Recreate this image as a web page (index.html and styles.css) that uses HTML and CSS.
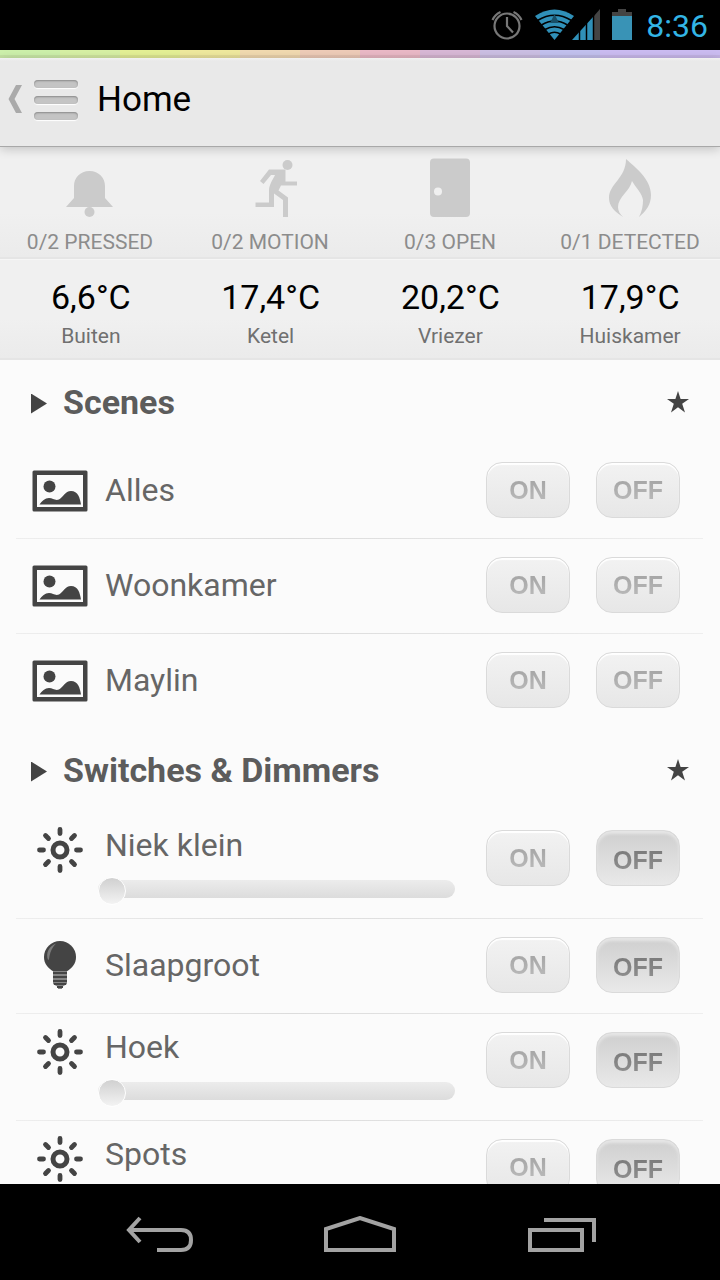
FILE: index.html
```html
<!DOCTYPE html>
<html lang="nl">
<head>
<meta charset="utf-8">
<meta name="viewport" content="width=device-width, initial-scale=1">
<title>Home</title>
<link rel="stylesheet" href="styles.css">
</head>
<body>
<svg class="sprite" aria-hidden="true">
  <symbol id="scene" viewBox="0 0 56 42">
    <path fill-rule="evenodd" d="M2 0.500H54Q55.500 0.500 55.500 2V40Q55.500 41.500 54 41.500H2Q0.500 41.500 0.500 40V2Q0.500 0.500 2 0.500ZM5 5V37H51V5Z"/>
    <circle cx="17.500" cy="16.500" r="6"/>
    <path d="M7.500 34.500C10 31 13 28 17 28C21 28 23 31 27 29.500C31 27.500 33 21 39 21C46 21 48 28 49 34.500Z"/>
  </symbol>
  <symbol id="sun" viewBox="0 0 48 48">
    <circle cx="24" cy="24" r="7" fill="none" stroke="currentColor" stroke-width="5"/>
    <path fill="none" stroke="currentColor" stroke-width="4.800" stroke-linecap="round" d="M24 3.500V7.500M24 40.500V44.500M3.500 24H7.500M40.500 24H44.500M9.500 9.500L12.500 12.500M35.500 35.500L38.500 38.500M9.500 38.500L12.500 35.500M35.500 12.500L38.500 9.500"/>
  </symbol>
  <symbol id="bulb" viewBox="0 0 48 48">
    <path d="M24 0A16 16 0 0 0 8 16C8 23 12 27 17.500 30.500H30.500C36 27 40 23 40 16A16 16 0 0 0 24 0Z"/>
    <path fill="#7a7a7a" d="M20 2.500C13 5 9.500 12 12 19C13 19 13 18 13.500 15C14.500 10 16.500 6 20 2.500Z"/>
    <path fill="#858585" d="M17 30H31V43L26 46V48H22V46L17 43Z"/>
    <path fill="none" stroke="currentColor" stroke-width="2" d="M17 32H31M17 36H31M17 40H31M18 43H30M21 46H27"/>
  </symbol>
  <symbol id="star" viewBox="0 0 24 24">
    <path d="M12 1L14.600 9H23L16.200 13.700L19 22.500L12 17.300L5 22.500L7.800 13.700L1 9H9.400Z"/>
  </symbol>
</svg>

<div class="screen">
  <div class="status">
    <svg class="status-icons" viewBox="0 0 150 50" role="img" aria-label="Alarm, wifi, signaal, batterij">
      <g fill="none" stroke="#777" stroke-width="2.200">
        <circle cx="19" cy="26" r="12.500"/>
        <path d="M19 17V26L25 32.500M4.500 20Q7 14.500 12.500 12M33.500 20Q31 14.500 25.500 12"/>
      </g>
      <path fill="#3090b8" d="M66.500 40L47 16Q66.500 3 86 16Z"/>
      <path fill="none" stroke="#000" stroke-width="1.600" d="M49.500 20.500Q66.500 10 83.500 20.500M53.500 25Q66.500 17 79.500 25M57 29.500Q66.500 24 76 29.500M60.500 34Q66.500 30.500 72.500 34"/>
      <path fill="#185068" d="M66.500 14L71 23H62Z"/>
      <path fill="#3090b8" d="M84 40L105 17V40Z"/>
      <path fill="#444" d="M106 16L112 9V40H106Z"/>
      <path stroke="#000" stroke-width="1.500" d="M91.500 20V40M98.500 20V40M105.500 14V40"/>
      <path fill="#444" d="M124 12H130V9H138V12H144V16H124Z"/>
      <path fill="#3993b6" d="M124 16H144V40H124Z"/>
    </svg>
    <time class="clock">8:36</time>
  </div>

  <div class="rainbow"></div>

  <header class="bar">
    <button class="menu" type="button" aria-label="Menu">
      <svg class="chevron" viewBox="0 0 14 28"><path fill="#aaa" d="M8 0H14L6.500 14L14 28H8L0.500 14Z"/></svg>
      <span class="lines"><i></i><i></i><i></i></span>
    </button>
    <h1 class="title">Home</h1>
  </header>

  <main class="content">
    <section class="sensors">
      <div class="sensor">
        <svg class="sensor-icon" viewBox="0 0 60 60"><path d="M29.500 13C20 13 14 20 14 28V40L6 49H53L45 40V28C45 20 39 13 29.500 13Z"/><circle cx="29.500" cy="54" r="5"/></svg>
        <span>0/2 PRESSED</span>
      </div>
      <div class="sensor">
        <svg class="sensor-icon" viewBox="0 0 60 60"><circle cx="47.500" cy="7" r="5"/><path d="M29 11.500H45.500V23.500H57V27.500H41L38.500 32.500L48 39.500V59H43V42L34 35.500V49H15.500V44.500H29V33C29 27 32 23 35 17H31L23.500 26L20 23Z"/></svg>
        <span>0/2 MOTION</span>
      </div>
      <div class="sensor">
        <svg class="sensor-icon" viewBox="0 0 60 60"><path fill-rule="evenodd" d="M14 0.500H46Q50 0.500 50 4.500V55Q50 59 46 59H14Q10 59 10 55V4.500Q10 0.500 14 0.500ZM18 29.500A4 4 0 1 0 18 37.500A4 4 0 1 0 18 29.500Z"/></svg>
        <span>0/3 OPEN</span>
      </div>
      <div class="sensor">
        <svg class="sensor-icon" viewBox="0 0 60 60"><path d="M26 1C35 9 51 21 51 37C51 47 46 53 39 59C42 53 43 48 43 42C42 35 36 30 32 23C30 33 18 39 18 49C18 53 20 56 23 59C15 54 9 48 9 40C9 26 26 20 26 1Z"/></svg>
        <span>0/1 DETECTED</span>
      </div>
    </section>

    <section class="temps">
      <div class="temp"><strong>6,6°C</strong><span>Buiten</span></div>
      <div class="temp"><strong>17,4°C</strong><span>Ketel</span></div>
      <div class="temp"><strong>20,2°C</strong><span>Vriezer</span></div>
      <div class="temp"><strong>17,9°C</strong><span>Huiskamer</span></div>
    </section>

    <section class="group">
      <div class="group-head">
        <span class="arrow"></span>
        <h2>Scenes</h2>
        <svg class="star"><use href="#star"/></svg>
      </div>
      <ul class="rows">
        <li class="row">
          <svg class="icon scene"><use href="#scene"/></svg>
          <span class="name">Alles</span>
          <div class="buttons"><button class="btn" type="button"><span>ON</span></button><button class="btn" type="button"><span>OFF</span></button></div>
        </li>
        <li class="row">
          <svg class="icon scene"><use href="#scene"/></svg>
          <span class="name">Woonkamer</span>
          <div class="buttons"><button class="btn" type="button"><span>ON</span></button><button class="btn" type="button"><span>OFF</span></button></div>
        </li>
        <li class="row">
          <svg class="icon scene"><use href="#scene"/></svg>
          <span class="name">Maylin</span>
          <div class="buttons"><button class="btn" type="button"><span>ON</span></button><button class="btn" type="button"><span>OFF</span></button></div>
        </li>
      </ul>
    </section>

    <section class="group">
      <div class="group-head">
        <span class="arrow"></span>
        <h2>Switches &amp; Dimmers</h2>
        <svg class="star"><use href="#star"/></svg>
      </div>
      <ul class="rows">
        <li class="row dimmer">
          <svg class="icon"><use href="#sun"/></svg>
          <div class="control">
            <label class="name" for="niek">Niek klein</label>
            <input class="slider" id="niek" type="range" min="0" max="100" value="0">
          </div>
          <div class="buttons"><button class="btn" type="button"><span>ON</span></button><button class="btn pressed" type="button" aria-pressed="true"><span>OFF</span></button></div>
        </li>
        <li class="row">
          <svg class="icon"><use href="#bulb"/></svg>
          <span class="name">Slaapgroot</span>
          <div class="buttons"><button class="btn" type="button"><span>ON</span></button><button class="btn pressed" type="button" aria-pressed="true"><span>OFF</span></button></div>
        </li>
        <li class="row dimmer">
          <svg class="icon"><use href="#sun"/></svg>
          <div class="control">
            <label class="name" for="hoek">Hoek</label>
            <input class="slider" id="hoek" type="range" min="0" max="100" value="0">
          </div>
          <div class="buttons"><button class="btn" type="button"><span>ON</span></button><button class="btn pressed" type="button" aria-pressed="true"><span>OFF</span></button></div>
        </li>
        <li class="row dimmer">
          <svg class="icon"><use href="#sun"/></svg>
          <div class="control">
            <label class="name" for="spots">Spots</label>
            <input class="slider" id="spots" type="range" min="0" max="100" value="0">
          </div>
          <div class="buttons"><button class="btn" type="button"><span>ON</span></button><button class="btn pressed" type="button" aria-pressed="true"><span>OFF</span></button></div>
        </li>
      </ul>
    </section>
  </main>

  <nav class="navbar">
    <button type="button" aria-label="Terug"><svg viewBox="0 0 72 40"><path d="M8 14H59Q69 14 69 24T59 34H35M18 2L7 14L18 26"/></svg></button>
    <button type="button" aria-label="Startscherm"><svg viewBox="0 0 72 40"><path d="M2 34V13L36 2L70 13V34Z"/></svg></button>
    <button type="button" aria-label="Recente apps"><svg viewBox="0 0 72 40"><path d="M4 14H56V34H4ZM18 4H68V26"/></svg></button>
  </nav>
</div>
</body>
</html>
```

FILE: styles.css
```css
* { box-sizing: border-box; }

body {
  margin: 0;
  font-family: Roboto, "Noto Sans", sans-serif;
  color: #666;
  background: #000;
}

h1, h2, ul { margin: 0; padding: 0; }
button { font: inherit; border: 0; padding: 0; background: none; }
svg { display: block; flex: none; fill: currentColor; }
.sprite { position: absolute; width: 0; height: 0; }

.screen { display: flex; flex-direction: column; height: 100vh; }

/* status bar */
.status {
  display: flex;
  flex: none;
  justify-content: flex-end;
  align-items: center;
  gap: 8px;
  height: 50px;
  padding-right: 12px;
  background: #000;
}
.status-icons { width: 150px; height: 50px; }
.clock { padding-top: 2px; font-size: 32px; line-height: 50px; color: #33b5e5; }

.rainbow {
  flex: none;
  height: 8px;
  background:
    linear-gradient(transparent 60%, rgba(90, 60, 60, .08) 60%),
    linear-gradient(90deg,
      #cdf0ab 0 60px, #d7f0a4 0 120px, #e4f095 0 180px, #efe99e 0 240px,
      #f1dab0 0 300px, #eeccb8 0 360px, #eab9c6 0 420px, #d8b8d6 0 480px,
      #cbbfe3 0 540px, #c2c1ee 0 600px, #cbbcf1 0);
}

/* title bar */
.bar {
  position: relative;
  display: flex;
  flex: none;
  align-items: center;
  gap: 19px;
  height: 89px;
  padding: 0 8px 4px;
  background: linear-gradient(#f2f2f2, #e9e9e9 3px);
  border-bottom: 1px solid #a8a8a8;
  box-shadow: 0 2px 10px rgba(0, 0, 0, .2);
}
.menu { display: flex; align-items: center; gap: 12px; }
.chevron { width: 14px; height: 28px; margin-bottom: 3px; }
.lines { display: grid; gap: 8px; }
.lines i {
  width: 44px;
  height: 8px;
  border-radius: 4px;
  background: #c4c4c4;
  box-shadow: inset 0 1px 2px #888, 0 1px 1px #fff;
}
.title { font-size: 35px; font-weight: 400; line-height: 44px; color: #000; }

/* content */
.content { flex: 1; min-height: 0; overflow: hidden; background: #fbfbfb; }

.sensors, .temps {
  display: grid;
  grid-template-columns: repeat(4, 1fr);
  text-align: center;
  background: linear-gradient(#f0f0f0 60%, #ebebeb);
  border-bottom: 2px solid #e5e5e5;
}
.sensors { height: 112px; padding-top: 11px; font-size: 21px; line-height: 24px; color: #8c8c8c; }
.sensor { display: flex; flex-direction: column; align-items: center; gap: 12px; white-space: nowrap; }
.sensor-icon { width: 60px; height: 60px; color: #cbcbcb; }

.temps { height: 101px; margin-bottom: 1px; padding: 16px 0 0 1px; border-top: 1px solid #f6f6f6; }
.temp { display: flex; flex-direction: column; gap: 6px; }
.temp strong { font-size: 34px; font-weight: 400; line-height: 42px; color: #000; }
.temp span { font-size: 21px; line-height: 24px; color: #707070; }

.group { padding: 0 17px 0 16px; }
.group-head { display: flex; align-items: center; height: 83px; padding: 0 13px 1px 15px; color: #444; }
.group-head h2 { flex: 1; font-size: 34px; line-height: 40px; font-weight: 700; color: #5c5c5c; }
.arrow {
  width: 16px;
  height: 20px;
  margin: 3px 16px 0 0;
  background: #444;
  clip-path: polygon(0 0, 100% 50%, 0 100%);
}
.star { width: 24px; height: 24px; }

.rows { list-style: none; }
.row {
  display: flex;
  align-items: center;
  height: 95px;
  padding: 0 23px 4px 16px;
  background: linear-gradient(90deg, #eee, #dcdcdc 40%, #eee) bottom / 100% 1px no-repeat;
}
.row:last-child { background: none; }
.icon { width: 56px; height: 48px; margin-right: 17px; color: #444; }
.icon.scene { height: 42px; margin-top: 2px; }
.name { flex: 1; font-size: 32px; line-height: 40px; }

.dimmer { align-items: flex-start; height: 107px; padding-top: 18px; }
.dimmer .icon { margin-top: -4px; margin-right: 10px; }
.control { display: flex; flex: 1; flex-direction: column; gap: 12px; margin-right: 31px; margin-top: -5px; }
.control .name { flex: none; padding-left: 7px; }

.slider {
  appearance: none;
  width: 100%;
  height: 24px;
  margin: 0;
  background: none;
}
.slider::-webkit-slider-runnable-track {
  height: 18px;
  border-radius: 9px;
  background: linear-gradient(#ececec, #dcdcdc);
}
.slider::-webkit-slider-thumb {
  appearance: none;
  width: 28px;
  height: 28px;
  margin-top: -3px;
  border: 1px solid #fff;
  border-radius: 50%;
  background: linear-gradient(#d0d0d0, #f3f3f3);
}

.buttons { display: flex; gap: 26px; }
.btn {
  width: 84px;
  height: 56px;
  border: 1px solid #dadada;
  border-radius: 16px;
  background: linear-gradient(#f2f2f2, #e7e7e7);
  box-shadow: inset 0 2px 1px #fff;
  font: 700 25px/28px "Liberation Sans", Arial, sans-serif;
}
.btn span {
  background: linear-gradient(#a2a2a2, #bcbcbc);
  background-clip: text;
  -webkit-background-clip: text;
  color: transparent;
}
.btn.pressed {
  padding-top: 4px;
  background: linear-gradient(#cfcfcf, #e9e9e9);
  box-shadow: inset 0 3px 3px #e6e6e6;
}
.btn.pressed span { background-image: linear-gradient(#777, #929292); }

/* navigation bar */
.navbar {
  display: grid;
  flex: none;
  grid-template-columns: repeat(3, 202px);
  justify-content: center;
  height: 96px;
  background: #000;
}
.navbar button { display: grid; place-items: center; padding-top: 8px; }
.navbar svg { width: 72px; height: 40px; fill: none; stroke: #a3a3a3; stroke-width: 4px; }
```
